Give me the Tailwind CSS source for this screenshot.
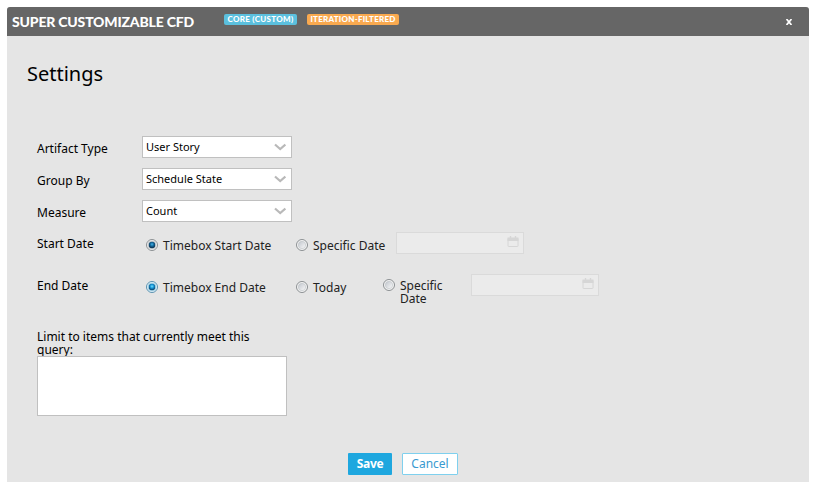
<!DOCTYPE html>
<html lang="en">
<head>
<meta charset="utf-8">
<title>Super Customizable CFD</title>
<script src="https://cdn.jsdelivr.net/npm/@tailwindcss/browser@4"></script>
</head>
<body class="bg-white font-['Noto_Sans','Open_Sans',sans-serif] text-[12px] leading-[13px] text-black">
<svg class="absolute size-0">
  <defs>
    <radialGradient id="dot" cx=".5" cy=".4" r=".6"><stop offset="0" stop-color="#45b5e8"/><stop offset=".45" stop-color="#146a9e"/><stop offset="1" stop-color="#08263f"/></radialGradient>
    <radialGradient id="dotFocus" cx=".5" cy=".4" r=".6"><stop offset="0" stop-color="#6fe0ff"/><stop offset=".5" stop-color="#138fd0"/><stop offset="1" stop-color="#08365c"/></radialGradient>
    <linearGradient id="well" x1="0" y1="0" x2="1" y2="1"><stop offset="0" stop-color="#c0c5cc"/><stop offset="1" stop-color="#fafafa"/></linearGradient>
    <symbol id="on" viewBox="0 0 12 12"><circle cx="6" cy="6" r="5.5" fill="#f4f4f4" stroke="#8b8f92"/><circle cx="6" cy="6" r="4" fill="#d5dce2" stroke="#b5bcc2" stroke-width=".6"/><circle cx="6" cy="6" r="3.2" fill="url(#dot)"/></symbol>
    <symbol id="onFocus" viewBox="0 0 12 12"><circle cx="6" cy="6" r="5.5" fill="#e9f8ff" stroke="#5b91ae"/><circle cx="6" cy="6" r="4" fill="#c5e7f5" stroke="#86bfd9" stroke-width=".6"/><circle cx="6" cy="6" r="3.2" fill="url(#dotFocus)"/></symbol>
    <symbol id="off" viewBox="0 0 12 12"><circle cx="6" cy="6" r="5.5" fill="#f4f4f4" stroke="#8b8f92"/><circle cx="6" cy="6" r="3.7" fill="url(#well)" stroke="#c0c4c8" stroke-width=".6"/></symbol>
    <symbol id="chev" viewBox="0 0 12 8"><path d="M1 1.5 6.2 6 11.4 1.5" fill="none" stroke="#b9b9b9" stroke-width="2.2"/></symbol>
    <symbol id="cal" viewBox="0 0 12 12"><path d="M1 2.5h10v7.5q0 .5-.5.5h-9q-.5 0-.5-.5z" fill="none" stroke="#d6d6d6"/><path d="M.5 1.5h11v3.5H.5z" fill="#d6d6d6"/><path d="M3.5 0v2M8.5 0v2" stroke="#d6d6d6" stroke-width="1.4"/></symbol>
  </defs>
</svg>
<main class="mt-[7px] ml-[7px] flex h-[475px] w-[802px] flex-col overflow-hidden rounded-t-[3px] bg-[#e5e5e5]">
  <header class="flex h-[29px] shrink-0 items-start bg-[#666] pl-[5px] font-['Lato','Open_Sans',sans-serif] text-white">
    <h1 class="mt-[7px] w-[212px] whitespace-nowrap text-[14px] leading-[15px] font-black tracking-[-0.18px]">SUPER CUSTOMIZABLE CFD</h1>
    <span class="mt-[7px] h-[11px] w-[73px] rounded-[2px] bg-[#5bc0de] text-center text-[8px] leading-[11px] font-black tracking-[0.3px] whitespace-nowrap">CORE (CUSTOM)</span>
    <span class="mt-[7px] ml-[10px] h-[11px] w-[92px] rounded-[2px] bg-[#f9a94f] text-center text-[8px] leading-[11px] font-black tracking-[0.25px] whitespace-nowrap">ITERATION-FILTERED</span>
    <svg class="mt-[12px] ml-[387px] size-[6px]" viewBox="0 0 6 6"><path d="M.5 0 5.5 6M5.5 0 .5 6" stroke="#fff" stroke-width="1.7"/></svg>
  </header>
  <h2 class="mt-[24px] ml-[20px] h-[28px] text-[20px] leading-[28px]">Settings</h2>
  <form class="mt-[48px] ml-[30px] flex flex-col">
    <div class="flex h-[32px]"><label class="w-[105px] pt-[6px]">Artifact Type</label><div class="flex h-[22px] w-[150px] items-center justify-between border border-[#c0c0c0] bg-white pr-[5px] pl-[3px] text-[11px]"><span class="-mt-[2px]">User Story</span><svg class="h-[8px] w-[12px]"><use href="#chev"/></svg></div></div>
    <div class="flex h-[32px]"><label class="w-[105px] pt-[6px]">Group By</label><div class="flex h-[22px] w-[150px] items-center justify-between border border-[#c0c0c0] bg-white pr-[5px] pl-[3px] text-[11px]"><span class="-mt-[2px]">Schedule State</span><svg class="h-[8px] w-[12px]"><use href="#chev"/></svg></div></div>
    <div class="flex h-[32px]"><label class="w-[105px] pt-[6px]">Measure</label><div class="flex h-[22px] w-[150px] items-center justify-between border border-[#c0c0c0] bg-white pr-[5px] pl-[3px] text-[11px]"><span class="-mt-[2px]">Count</span><svg class="h-[8px] w-[12px]"><use href="#chev"/></svg></div></div>
    <div class="flex h-[42px]">
      <span class="w-[109px] pt-[5px]">Start Date</span>
      <label class="flex w-[150px] gap-[5px] pt-[7px] text-[#222]"><svg class="size-[12px]"><use href="#on"/></svg><span>Timebox Start Date</span></label>
      <label class="flex w-[100px] gap-[5px] pt-[7px] text-[#222]"><svg class="size-[12px] shrink-0"><use href="#off"/></svg><span class="whitespace-nowrap">Specific Date</span></label>
      <div class="flex h-[22px] w-[128px] justify-end border border-[#dadada] bg-[#ebebeb] pt-[3px] pr-[4px]"><svg class="size-[12px]"><use href="#cal"/></svg></div>
    </div>
    <div class="flex h-[56px]">
      <span class="w-[109px] pt-[5px]">End Date</span>
      <label class="flex w-[150px] gap-[5px] pt-[7px] text-[#222]"><svg class="size-[12px]"><use href="#onFocus"/></svg><span>Timebox End Date</span></label>
      <label class="flex w-[87px] gap-[5px] pt-[7px] text-[#222]"><svg class="size-[12px]"><use href="#off"/></svg><span>Today</span></label>
      <label class="flex w-[88px] gap-[5px] pt-[5px] text-[#222]"><svg class="size-[12px]"><use href="#off"/></svg><span>Specific<br>Date</span></label>
      <div class="flex h-[22px] w-[128px] justify-end border border-[#dadada] bg-[#ebebeb] pt-[3px] pr-[4px]"><svg class="size-[12px]"><use href="#cal"/></svg></div>
    </div>
    <label class="h-[26px] whitespace-nowrap">Limit to items that currently meet this<br>query:</label>
    <div class="h-[60px] w-[250px] border border-[#c0c0c0] bg-white"></div>
  </form>
  <footer class="mt-[37px] ml-[341px] flex gap-[10px] leading-[20px]">
    <button type="button" class="h-[22px] w-[44px] rounded-[1px] bg-[#1ea7df] font-bold tracking-[-0.3px] text-white">Save</button>
    <button type="button" class="h-[22px] w-[56px] rounded-[1px] border border-[#7fd0ee] bg-white text-[#3a9ad0]">Cancel</button>
  </footer>
</main>
</body>
</html>
